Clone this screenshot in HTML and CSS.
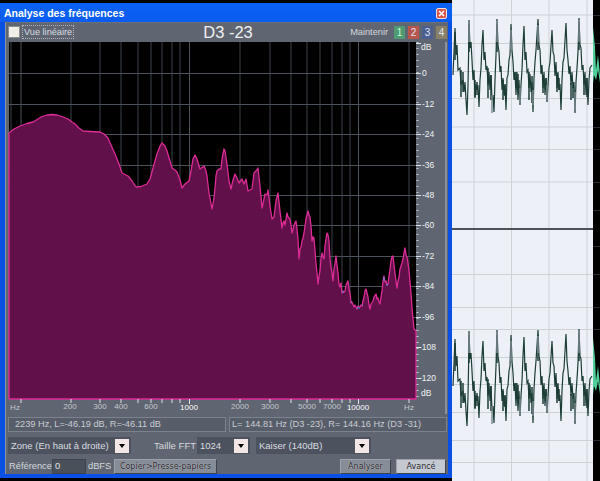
FILE: index.html
```html
<!DOCTYPE html>
<html lang="fr">
<head>
<meta charset="utf-8">
<title>Analyse des fréquences</title>
<link rel="stylesheet" href="styles.css">
</head>
<body>
<div class="desktop">
  <section class="window">
    <header class="titlebar">
      <span class="title">Analyse des fréquences</span>
      <svg class="close" width="11" height="11" viewBox="0 0 11 11">
        <rect x=".5" y=".5" width="10" height="10" rx="1.5" fill="#d8564a" stroke="#f2e0dc"/>
        <path d="M3 3l5 5M8 3l-5 5" stroke="#fff" stroke-width="1.6"/>
      </svg>
    </header>
    <div class="client">
      <div class="toolbar">
        <label class="check"><span class="box"></span><span class="focus">Vue linéaire</span></label>
        <div class="note">D3 -23</div>
        <div class="hold">
          <span>Maintenir</span>
          <div class="holds">
            <span class="hb hb1">1</span><span class="hb hb2">2</span><span class="hb hb3">3</span><span class="hb hb4">4</span>
          </div>
        </div>
      </div>

      <svg class="plot" width="440" height="373" viewBox="8 40 440 373">
        <rect x="9" y="41" width="407" height="357" fill="#000"/>
        <g class="grid">
          <path d="M11 41V398M71 41V398M100 41V398M121 41V398M138 41V398M151 41V398M162 41V398M172 41V398M180 41V398M240 41V398M270 41V398M291 41V398M307 41V398M320 41V398M332 41V398M342 41V398M350 41V398M409 41V398"/>
          <path class="major" d="M21 41V398M189.500 41V398M358.500 41V398M9 72.500H416M9 103.500H416M9 133.500H416M9 164.500H416M9 194.500H416M9 224.500H416M9 255.500H416M9 285.500H416M9 316.500H416M9 346.500H416M9 377.500H416"/>
        </g>
        <path class="curve" d="M9 132L14 128 20 125 27 122.500 33 121 38 118 42 115.500 47 114 52 113.500 57 114 62 115.500 68 118 72 121 75 123 79 127 83 130 90 130.500 100 131 104 133 108 137 111 144 115 153 119 163 122 172 125 173.500 128 175 132 180 136 186 141 185.500 147 183 150 178 153 167 157 153 160 145 162 142 165 145 167 150 170 160 172 167 175 169 177 171 180 179 182 187 185 183 189 180 191 170 193 158 195 154 197 158 200 168 204 165 206 170 207 175 209 192 212 208 214 197 215 187 216 175 217 170 219 168 221 168 222 158 224 148 225 150 227 163 229 180 231 188 233 179 235 173 237 177 239 182 242 178 244 183 246 178 248 190 250 189 252 188 254 172 256 170 258 167 260 185 262 207 264 198 265 193 267 194 268 189 270 205 272 218 274 216 276 200 278 192 280 210 282 227 283 222 284 220 285 224 287 212 288 216 290 218 292 232 294 224 296 220 297 228 298 238 299 258 300 248 301 246 302 240 303 237 304 232 305 225 306 218 308 210 309 214 310 216 311 225 312 240 313 236 314 237 315 250 316 262 317 272 318 283 319 275 320 270 321 258 322 252 323 256 324 258 325 245 326 238 327 232 328 234 329 240 330 258 331 266 332 272 333 280 334 268 335 262 336 255 337 264 338 272 339 283 340 286 341 282 342 292 343 290 344 291 345 290 346 284 348 280 349 288 350 292 351 302 352 301 354 306 355 304 357 308 358 305 360 306 361 304 362 305 363 300 364 296 365 290 366 288 367 292 368 296 369 304 370 308 371 303 373 300 374 296 376 293 377 298 378 297 379 301 380 303 381 296 382 290 383 280 384 275 385 281 386 280 387 284 388 283 389 275 390 268 391 260 392 256 393 255 394 264 395 272 396 280 397 287 398 280 399 276 400 268 402 262 403 258 404 252 405 247 406 254 407 256 408 262 409 270 410 281 411 292 412 307 413 318 414 328 416 330V398H9Z"/>
        <path class="specks" d="M342 291h2M357 307h3M384 276v4M388 284h-2M362 304h1M351 301h1"/>
        <g class="ticks">
          <path d="M21 398v4M71 398v4M100 398v4M121 398v4M138 398v4M151 398v4M162 398v4M172 398v4M180 398v4M189.500 398v5M240 398v4M270 398v4M291 398v4M307 398v4M320 398v4M332 398v4M342 398v4M350 398v4M358.500 398v5M409 398v4"/>
          <path d="M416 42.500h5M416 72.500h5M416 103.500h5M416 133.500h5M416 164.500h5M416 194.500h5M416 224.500h5M416 255.500h5M416 285.500h5M416 316.500h5M416 346.500h5M416 377.500h5"/>
          <path class="minor" d="M417.500 41V398" />
        </g>
        <path class="edge" d="M446 41V413"/>
        <g class="ylabels">
          <text x="421" y="49">dB</text><text x="422" y="75">0</text>
          <text x="422" y="106">-12</text><text x="422" y="136">-24</text><text x="422" y="167">-36</text>
          <text x="422" y="197">-48</text><text x="422" y="227">-60</text><text x="422" y="258">-72</text>
          <text x="422" y="288">-84</text><text x="422" y="319">-96</text><text x="419" y="349">-108</text>
          <text x="419" y="380">-120</text><text x="421" y="395">dB</text>
        </g>
        <g class="xlabels">
          <text x="15" y="409">Hz</text><text x="70" y="408">200</text><text x="100" y="408">300</text>
          <text x="121" y="408">400</text><text x="151" y="408">600</text>
          <text class="strong" x="189" y="409">1000</text><text x="240" y="408">2000</text><text x="270" y="408">3000</text>
          <text x="307" y="408">5000</text><text x="332" y="408">7000</text>
          <text class="strong" x="358" y="409">10000</text><text x="409" y="409">Hz</text>
        </g>
      </svg>

      <div class="status">
        <div class="readout readout-a">2239 Hz, L=-46.19 dB, R=-46.11 dB</div>
        <div class="readout">L= 144.81 Hz (D3 -23), R= 144.16 Hz (D3 -31)</div>
      </div>

      <div class="controls">
        <div class="combo combo-zone"><span>Zone (En haut à droite)</span><i class="arrow"></i></div>
        <span class="fft-label">Taille FFT</span>
        <div class="combo combo-fft"><span>1024</span><i class="arrow"></i></div>
        <div class="combo combo-win"><span>Kaiser (140dB)</span><i class="arrow"></i></div>
      </div>

      <div class="actions">
        <span class="ref-label">Référence</span>
        <span class="field">0</span>
        <span class="unit">dBFS</span>
        <button class="btn btn-copy">Copier&gt;Presse-papiers</button>
        <button class="btn btn-an">Analyser</button>
        <button class="btn btn-av">Avancé</button>
      </div>
    </div>
  </section>

  <aside class="wave">
    <svg width="148" height="481" viewBox="452 0 148 481">
      <rect x="452" y="0" width="141" height="481" fill="#eef0f8"/>
      <g class="wgrid">
        <path d="M474 0V481M511.500 0V481M549 0V481M587 0V481"/>
        <path d="M452 15H593M452 43.500H593M452 71.500H593M452 98.500H593M452 127H593M452 149.500H593M452 182H593M452 274.500H593M452 307.500H593M452 329.500H593M452 357.500H593M452 384.500H593M452 412.500H593M452 440.500H593M452 462.500H593"/>
      </g>
      <path class="sep" d="M452 229H600"/>
      <rect x="593" y="0" width="7" height="481" fill="#000"/>
      <path class="wticks" d="M593 15.500h7M593 43.500h7M593 98.500h7M593 127.500h7M593 149.500h7M593 182.500h7M593 210.500h7M593 246.500h7M593 274.500h7M593 307.500h7M593 329.500h7M593 384.500h7M593 412.500h7M593 440.500h7"/>
      <g id="chan">
        <path class="wv" d="M453 75L455 28 456 55 457 45 458 70 460 68 461 85 463 80 464 92 465 82 466 100 467 115 468 85 468.500 60 469 20 470 48 471 42 472 60 473 80 474 70 475 98 476 84 477 90 478 85 479 107 480 80 481 68 482 45 483 30 484 60 485 52 486 70 487 66 488 85 489 72 490 90 491 75 492 100 493 95 494 112 495 80 496 55 497 19 498 45 499 52 500 72 501 66 502 90 503 78 504 95 505 85 506 110 507 78 508 75 509 60 510 55 511 24 512 50 513 62 514 80 515 72 516 95 517 72 518 100 519 80 520 105 521 85 522 70 523 45 524 26 525 60 526 52 527 72 528 70 529 88 530 74 531 92 532 82 533 112 534 78 535 62 536 50 538 19 539 45 540 50 541 74 542 65 543 88 544 72 545 95 546 78 547 102 548 85 549 68 550 62 552 30 553 52 554 55 555 76 556 62 557 88 558 72 559 90 560 84 561 110 562 80 563 62 564 58 566 23 567 50 568 60 569 74 570 66 571 85 572 72 573 88 574 82 575 113 576 82 577 68 578 52 579 18 580 45 581 48 582 70 583 65 584 85 585 72 586 95 587 78 588 105 589 80 590 68 592 65"/>
        <path class="wthick" d="M461 70V97M463 72V92M475 80V97M477 82V95M488 68V98M491 75V100M503 80V100M505 84V96M516 72V88M518 74V90M529 72V100M532 76V103M543 75V93M546 78V90M557 73V92M559 78V90M571 83V100M573 85V98M584 75V95M587 78V97M455 32V60M469 24V52M497 24V52M538 24V50M579 22V50"/>
        <path class="wg" d="M469 22V42M497 21V42M511 30V50M538 25V42M579 20V42M492 95V113M533 90V105M575 92V110M520 88V103M547 85V100"/>
        <path class="wgreen" d="M593 84V27L595 47 596 70 598 55 600 75V83L598 70 596 80 594 75Z"/>
      </g>
      <use href="#chan" y="311"/>
    </svg>
  </aside>
</div>
</body>
</html>
```
FILE: styles.css
```css
html, body { margin: 0; padding: 0; }
body {
  background: #000;
  font-family: "Liberation Sans", Arial, sans-serif;
  font-size: 9.300px;
  color: #d4d8dc;
  overflow: hidden;
}
.desktop { display: flex; width: 600px; height: 481px; background: #000; }

.window {
  box-sizing: border-box;
  width: 452px;
  height: 475px;
  margin-top: 3px;
  display: flex;
  flex-direction: column;
  background: #0a50e4;
  padding: 0 4px 4px 5px;
  flex: none;
}
.titlebar {
  height: 19px;
  margin: 0 -4px 0 -5px;
  padding: 0 5px 0 4px;
  display: flex;
  align-items: center;
  justify-content: space-between;
  background: linear-gradient(#0a62f4, #0a5cf0);
  flex: none;
}
.title { font: bold 10.500px "Liberation Sans", sans-serif; color: #fff; }
.close { display: block; margin-top: 2px; }

.client {
  flex: 1;
  display: flex;
  flex-direction: column;
  background: #5f6671;
  border-left: 1px solid #8a94a2;
  border-top: 1px solid #6a717c;
  box-sizing: border-box;
  padding-left: 2px;
  min-height: 0;
}
.toolbar {
  height: 18px;
  display: flex;
  align-items: center;
  flex: none;
}
.check { display: flex; align-items: center; gap: 3px; width: 194px; color: #d8dce0; font-size: 9.200px; }
.box { width: 10px; height: 10px; background: #efefe8; border: 1px solid #8b8f94; display: block; }
.focus { outline: 1px dotted #aeb2b8; padding: 0 1px; line-height: 12px; }
.note { width: 52px; text-align: center; font-size: 16.500px; color: #eef0f2; white-space: nowrap; }
.hold { margin-left: auto; display: flex; align-items: center; gap: 6px; font-size: 9.200px; padding-right: 1px; }
.holds { display: flex; gap: 3px; }
.hb { width: 11px; height: 13px; font-size: 10px; line-height: 13px; text-align: center; color: #dfe4f4; }
.hb1 { background: #4f9a72; color: #bfffd0; }
.hb2 { background: #b8564e; }
.hb3 { background: #4d5f90; }
.hb4 { background: #8a8068; }

.plot { display: block; flex: none; }
.grid path { fill: none; stroke: #3b414b; stroke-width: 1; }
.grid .major { stroke: #4c525c; }
.curve { fill: #62104a; stroke: #dc2c96; stroke-width: 1.300; stroke-linejoin: round; }
.specks { fill: none; stroke: #3aa0e0; stroke-width: 1; }
.ticks path { fill: none; stroke: #dfe2e6; stroke-width: 1; }
.ticks .minor { stroke-dasharray: 1 5; stroke-width: 2; stroke: #c8ccd2; }
.edge { stroke: #8a929c; stroke-width: 2; }
.ylabels text { font: 8.500px "Liberation Sans", sans-serif; fill: #f0f2f4; }
.xlabels text { font: 8px "Liberation Sans", sans-serif; fill: #c4c8cc; text-anchor: middle; }
.xlabels .strong { fill: #fff; }

.status { display: flex; gap: 3px; padding-top: 3px; flex: none; }
.readout {
  box-sizing: border-box;
  width: 218px;
  height: 15px;
  line-height: 13px;
  padding-left: 2px;
  background: #575e69;
  border: 1px solid #7b828c;
  color: #c8ccd2;
  font-size: 9.200px;
  white-space: nowrap;
}
.readout-a { padding-left: 6px; }

.controls { display: flex; align-items: center; height: 17px; margin-top: 5px; flex: none; }
.combo {
  box-sizing: border-box;
  height: 17px;
  display: flex;
  align-items: center;
  justify-content: space-between;
  background: #4d535e;
  padding: 0 2px 0 3px;
  color: #d8dce0;
  font-size: 9.500px;
  white-space: nowrap;
  flex: none;
}
.combo-zone { width: 123px; }
.fft-label { margin-left: 23px; width: 43px; white-space: nowrap; font-size: 9.600px; flex: none; }
.combo-fft { width: 53px; }
.combo-win { width: 115px; margin-left: 6px; }
.arrow {
  width: 14px;
  height: 14px;
  background: #f2e6e6;
  position: relative;
  display: block;
  flex: none;
}
.arrow::after {
  content: "";
  position: absolute;
  left: 4px;
  top: 5px;
  border: 3px solid transparent;
  border-top: 4px solid #000;
  border-bottom: 0;
}

.actions { display: flex; align-items: center; height: 16px; margin-top: 4px; flex: none; }
.ref-label { width: 43px; padding-left: 1px; flex: none; white-space: nowrap; }
.unit { width: 24px; margin-left: 2px; flex: none; }
.field {
  box-sizing: border-box;
  width: 34px;
  height: 15px;
  line-height: 13px;
  padding-left: 2px;
  background: #4a505a;
  border: 1px solid #3e444d;
  color: #e0e4e8;
  flex: none;
}
.btn {
  box-sizing: border-box;
  height: 15px;
  padding: 0;
  font: 8px "DejaVu Sans", sans-serif;
  color: #1e2228;
  background: #868d96;
  border: 1px solid #9ca2aa;
  border-right-color: #3e444c;
  border-bottom-color: #3e444c;
  text-shadow: 0 0 1px #e4e8ec;
  flex: none;
}
.btn-copy { width: 103px; margin-left: 2px; }
.btn-an { width: 51px; margin-left: 123px; }
.btn-av { width: 50px; margin-left: 5px; background: #c4c8d0; }

.wave { flex: 1; min-width: 0; }
.wave svg { display: block; }
.wgrid path { fill: none; stroke: #cdd2d6; stroke-width: 1; }
.sep { stroke: #4c5258; stroke-width: 2; }
.wticks { stroke: #2a2e34; stroke-width: 1; }
.wv { fill: none; stroke: #1c3d36; stroke-width: 1.200; stroke-linejoin: miter; }
.wthick { fill: none; stroke: #1c3d36; stroke-width: 1.500; }
.wg { fill: none; stroke: #7f8a92; stroke-width: 1.500; }
.wgreen { fill: #4fd09a; }
```
